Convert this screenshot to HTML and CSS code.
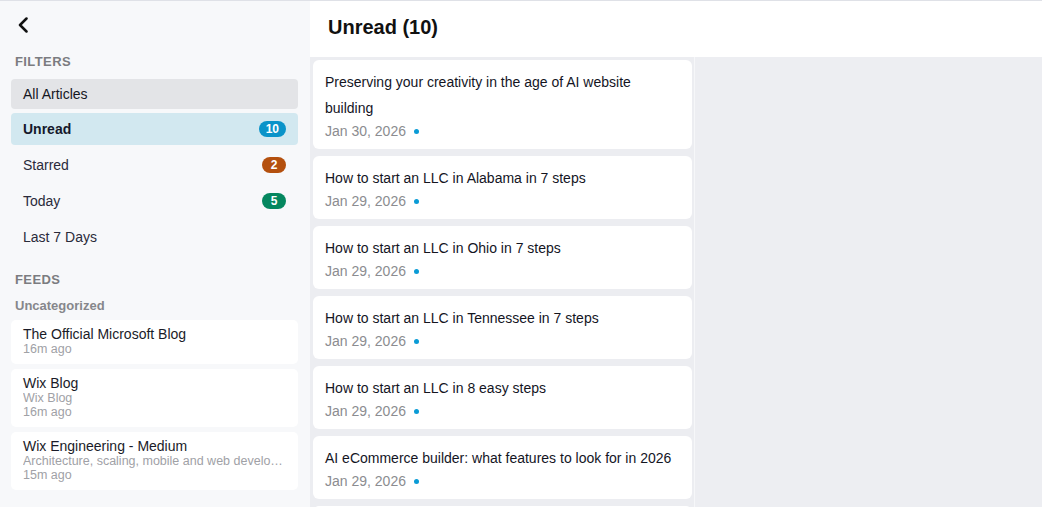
FILE: index.html
```html
<!DOCTYPE html>
<html lang="en">
<head>
    <meta charset="UTF-8">
    <meta name="viewport" content="width=device-width, initial-scale=1.0">
    <title>Reader - Unread</title>
    <link rel="stylesheet" href="styles.css">
</head>
<body>
    <div class="app">
        <aside class="sidebar">
            <button class="back-btn" aria-label="Back">
                <svg width="12" height="16" viewBox="0 0 12 16">
                    <path d="M9.5 1.5 L3 8 L9.5 14.5" fill="none" stroke="#111" stroke-width="2.5" stroke-linecap="round" stroke-linejoin="round"/>
                </svg>
            </button>

            <div class="section-title">FILTERS</div>
            <ul class="filter-list">
                <li class="filter-item hover">All Articles</li>
                <li class="filter-item active">Unread <span class="badge badge-blue">10</span></li>
                <li class="filter-item">Starred <span class="badge badge-orange">2</span></li>
                <li class="filter-item">Today <span class="badge badge-green">5</span></li>
                <li class="filter-item">Last 7 Days</li>
            </ul>

            <div class="section-title feeds-title">FEEDS</div>
            <div class="group-title">Uncategorized</div>
            <ul class="feed-list">
                <li class="feed-card">
                    <div class="feed-name">The Official Microsoft Blog</div>
                    <div class="feed-meta">16m ago</div>
                </li>
                <li class="feed-card">
                    <div class="feed-name">Wix Blog</div>
                    <div class="feed-meta">Wix Blog</div>
                    <div class="feed-meta">16m ago</div>
                </li>
                <li class="feed-card">
                    <div class="feed-name">Wix Engineering - Medium</div>
                    <div class="feed-meta">Architecture, scaling, mobile and web development at Wix</div>
                    <div class="feed-meta">15m ago</div>
                </li>
            </ul>
        </aside>

        <main class="main">
            <header class="main-header">
                <h1>Unread (10)</h1>
            </header>
            <div class="content">
                <section class="article-list">
                    <article class="article-card">
                        <div class="article-title">Preserving your creativity in the age of AI website building</div>
                        <div class="article-date">Jan 30, 2026 <span class="dot"></span></div>
                    </article>
                    <article class="article-card">
                        <div class="article-title">How to start an LLC in Alabama in 7 steps</div>
                        <div class="article-date">Jan 29, 2026 <span class="dot"></span></div>
                    </article>
                    <article class="article-card">
                        <div class="article-title">How to start an LLC in Ohio in 7 steps</div>
                        <div class="article-date">Jan 29, 2026 <span class="dot"></span></div>
                    </article>
                    <article class="article-card">
                        <div class="article-title">How to start an LLC in Tennessee in 7 steps</div>
                        <div class="article-date">Jan 29, 2026 <span class="dot"></span></div>
                    </article>
                    <article class="article-card">
                        <div class="article-title">How to start an LLC in 8 easy steps</div>
                        <div class="article-date">Jan 29, 2026 <span class="dot"></span></div>
                    </article>
                    <article class="article-card">
                        <div class="article-title">AI eCommerce builder: what features to look for in 2026</div>
                        <div class="article-date">Jan 29, 2026 <span class="dot"></span></div>
                    </article>
                    <article class="article-card">
                        <div class="article-title">Website builder comparison guide</div>
                        <div class="article-date">Jan 28, 2026 <span class="dot"></span></div>
                    </article>
                </section>
                <section class="detail"></section>
            </div>
        </main>
    </div>
</body>
</html>
```

FILE: styles.css
```css
* {
    box-sizing: border-box;
}
html, body {
    margin: 0;
    padding: 0;
    height: 100%;
    overflow: hidden;
}
body {
    font-family: 'Liberation Sans', Arial, sans-serif;
    color: #1c1d2b;
    background: #fff;
}
.app {
    display: flex;
    height: 100vh;
    border-top: 1px solid #dfe1e7;
}

/* sidebar */
.sidebar {
    width: 310px;
    flex-shrink: 0;
    background-color: #f7f8fa;
    padding: 0 12px 0 11px;
    overflow: hidden;
}
.back-btn {
    display: block;
    margin: 16px 0 0 6px;
    padding: 0;
    border: none;
    background: none;
    height: 16px;
    cursor: pointer;
}
.back-btn svg {
    display: block;
}
.section-title {
    font-size: 13px;
    font-weight: bold;
    color: #7b7c80;
    letter-spacing: 0.4px;
    line-height: 16px;
    padding-left: 4px;
    margin-top: 21px;
    margin-bottom: 9px;
}
.feeds-title {
    margin-top: 19px;
    margin-bottom: 10px;
}
.filter-list,
.feed-list {
    list-style: none;
    margin: 0;
    padding: 0;
}
.filter-list {
    display: flex;
    flex-direction: column;
    gap: 4px;
}
.filter-item {
    display: flex;
    justify-content: space-between;
    align-items: center;
    font-size: 14px;
    line-height: 16px;
    padding: 8px 12px;
    border-radius: 4px;
    color: #2a2b3a;
}
.filter-item.hover {
    padding: 7px 12px;
    background-color: #e3e4e7;
    color: #15161f;
}
.filter-item.active {
    background-color: #d2e8f0;
    font-weight: bold;
    color: #15182b;
}
.badge {
    display: inline-block;
    min-width: 24px;
    height: 16px;
    line-height: 16px;
    padding: 0 7px;
    border-radius: 8px;
    font-size: 12px;
    font-weight: bold;
    color: #fff;
    text-align: center;
}
.badge-blue {
    background-color: #0a93c9;
}
.badge-orange {
    background-color: #b4500e;
}
.badge-green {
    background-color: #05875f;
}
.group-title {
    font-size: 13px;
    font-weight: bold;
    color: #86878b;
    line-height: 16px;
    padding-left: 4px;
    margin-bottom: 6px;
}
.feed-list {
    display: flex;
    flex-direction: column;
    gap: 5px;
}
.feed-card {
    background-color: #fff;
    border-radius: 5px;
    padding: 7px 13px 8px 12px;
}
.feed-name {
    font-size: 14px;
    line-height: 15px;
    color: #1a1b28;
}
.feed-meta {
    font-size: 12.5px;
    line-height: 14px;
    color: #a0a1a6;
    white-space: nowrap;
    overflow: hidden;
    text-overflow: ellipsis;
}

/* main */
.main {
    flex: 1;
    display: flex;
    flex-direction: column;
    min-width: 0;
}
.main-header {
    height: 56px;
    flex-shrink: 0;
    display: flex;
    align-items: center;
    padding: 0 0 4px 18px;
    background: #fff;
}
.main-header h1 {
    margin: 0;
    font-size: 20px;
    font-weight: bold;
    color: #111;
}
.content {
    flex: 1;
    display: flex;
    min-height: 0;
}
.article-list {
    width: 385px;
    flex-shrink: 0;
    background-color: #ecedf1;
    border-right: 1px solid #f6f7f9;
    padding: 3px 2px 0 3px;
    display: flex;
    flex-direction: column;
    gap: 7px;
    overflow: hidden;
}
.article-card {
    background-color: #fff;
    border-radius: 6px;
    padding: 9px 12px 10px;
    flex-shrink: 0;
}
.article-title {
    font-size: 14px;
    line-height: 26px;
    color: #14151f;
}
.article-date {
    font-size: 14px;
    line-height: 16px;
    margin-top: 2px;
    color: #8b8c90;
    display: flex;
    align-items: center;
}
.dot {
    display: inline-block;
    width: 5px;
    height: 5px;
    border-radius: 50%;
    background-color: #0a9bd6;
    margin-left: 8px;
}
.detail {
    flex: 1;
    background-color: #edeef2;
}
```
